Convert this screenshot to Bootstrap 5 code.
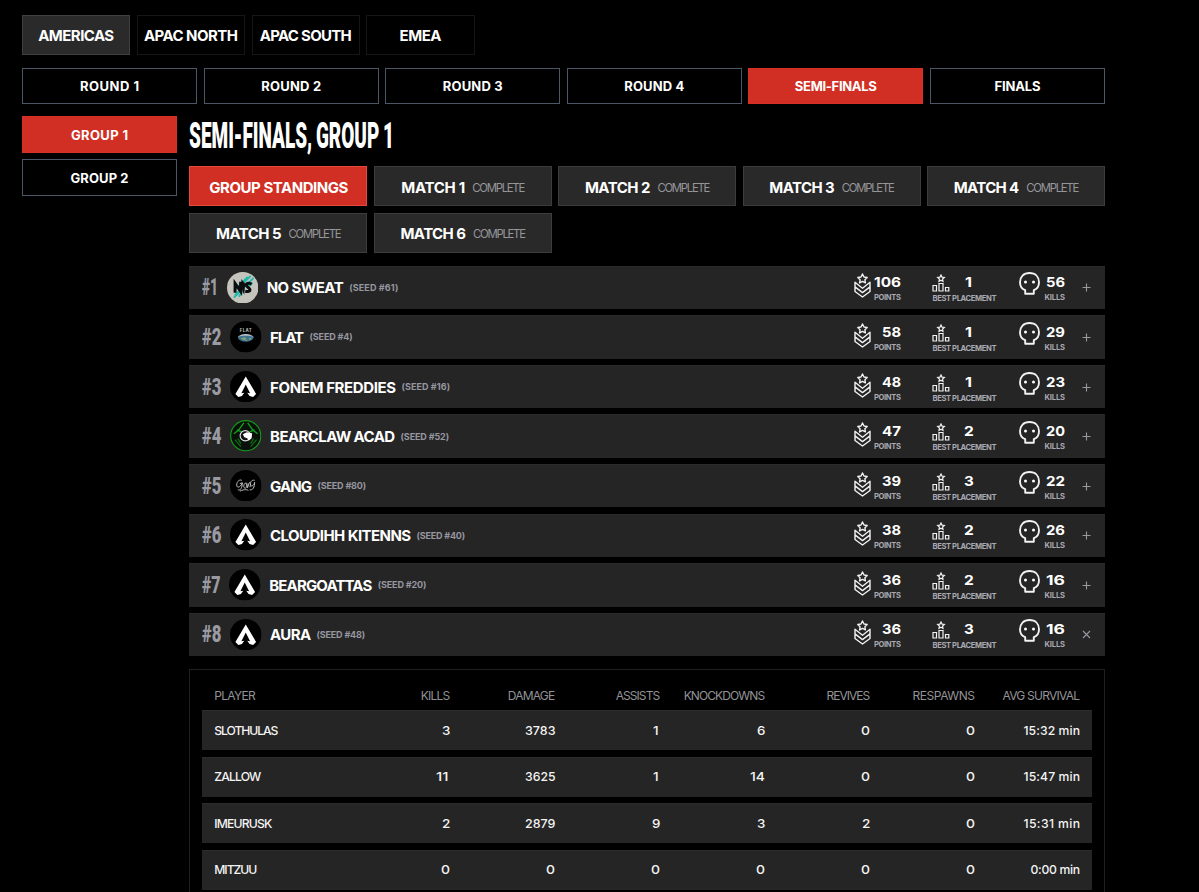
<!DOCTYPE html>
<html lang="en">
<head>
<meta charset="utf-8">
<title>Standings</title>
<link href="https://cdn.jsdelivr.net/npm/bootstrap@5.3.0/dist/css/bootstrap.min.css" rel="stylesheet">
<style>
body{background:#000;color:#fff;font-family:Inter,"Liberation Sans",sans-serif;overflow:hidden;height:892px}
.page-wrap{width:1083px;margin-left:22px;padding-top:15px}
.gap-s{gap:6.4px}
.rounds{margin-top:12.5px}
.layout{margin-top:12.3px;gap:12.3px}
.tile{display:flex;align-items:center;justify-content:center;border:1px solid;border-radius:0;padding:0;color:#fff;font-weight:700;line-height:1;white-space:nowrap}
.tile:hover{color:#fff}
.region{width:108.4px;height:40px;font-size:15px;border-color:#161616}
.region.on{background:#2a2a2a;border-color:#404040}
.stage{height:36.6px;font-size:13px;border:1.4px solid #4b5667;padding-top:1px}
.stage.on{background:#d12f24;border-color:#d93025}
.match{height:40.6px;font-size:15px;background:#292929;border-color:#3c3c3c;padding:2px 0 0 1px}
.match.on{background:#d12f24;border-color:#e3493e}
.match-grid{display:grid;grid-template-columns:repeat(5,1fr);gap:6.2px 6.4px}
.state{font-weight:400;font-size:11.3px;color:#97979a;margin-left:7px;position:relative;top:1px}
.side{width:155px}
.title{height:37px;margin-bottom:12.5px;line-height:39px;font-size:37px;font-family:Roboto,sans-serif;font-weight:900;word-spacing:-2px}
.sx{display:inline-block;white-space:nowrap;text-align:left}
.sx>span{display:inline-block;transform-origin:0 50%}
.teams{margin-top:12.4px;gap:6.2px}
.team{height:43.4px;background:#252525;padding-left:12.4px;border-top:1px solid #2b2b2b}
.rank{font-family:Roboto,sans-serif;font-weight:900;font-size:23px;line-height:24px;color:#9a9aa2;padding-top:1px}
.logo{width:31.5px;height:31.5px;margin:-1px 8.5px 0 9px;flex:none}
.tname{font-weight:700;font-size:15px;line-height:20px;white-space:nowrap;padding-top:1px}
.seed{font-weight:700;font-size:9px;line-height:20px;color:#9696a0;margin-left:5.5px;white-space:nowrap}
.stat{height:29px;line-height:1}
.st-points{width:47.5px;margin-right:31px}
.st-place{width:64.5px;margin-right:22.5px}
.st-kills{width:46px;margin-right:17px}
.num{font-weight:700;font-size:13.5px;line-height:13px;white-space:nowrap;margin-top:3px;height:13px}
.num .sx{vertical-align:top}
.lab{font-weight:700;font-size:7.6px;line-height:8px;color:#a9a9b3;white-space:nowrap;margin-top:5px}
.st-place .upper{height:22px}
.st-place .num{width:37px}
.st-place .lab{margin-top:0}
.st-place .ic{margin-top:1px}
.st-kills .ic{margin-top:-1px}
.toggle{margin-right:14px;stroke:#98989f;stroke-width:1.1}
.ic{fill:none;stroke:#f2f2f2;display:block;flex:none}
.panel{border:1px solid #202020;border-bottom:0;margin-top:12.6px;padding:13px 12px 0;height:260px}
.prow{display:grid;grid-template-columns:131px repeat(7,1fr);height:40.2px;margin-bottom:6.4px;background:#252525;border-top:1px solid #2c2c2c;padding:0 12px 0 12px;align-items:center;font-size:12.2px;line-height:18px;font-weight:500;color:#f4f4f4;white-space:nowrap}
.prow>*{text-align:right}.prow>:first-child{text-align:left}
.prow .sx{vertical-align:top}
.prow .one{margin-right:1.5px}
.prow.hd{height:27.4px;margin:0;background:none;border:0;font-size:12px;font-weight:400;color:#939396}
</style>
</head>
<body>
<svg class="d-none">
<symbol id="i-points" viewBox="0 0 17 25"><path d="M8.500 1l1.500 3 3.200.5-2.300 2.200.5 3.200-2.900-1.500-2.900 1.500.5-3.200L3.800 4.500 7 4zM1 9.300l7.500 6 7.500-6v9.200l-7.500 5.500L1 18.500zM1 13.900l7.500 5.700 7.500-5.700" stroke-width="1.400" stroke-linejoin="round"/></symbol>
<symbol id="i-place" viewBox="0 0 18 18"><path d="M9 1l1 2.100 2.300.3-1.700 1.600.4 2.300L9 6.200 7 7.300l.4-2.300-1.700-1.600L8 3.100zM1 11.500h3.500v5.500H1zM7 9.500h4v7.500H7zM13.500 13.500h3.300v3.500h-3.300z" stroke-width="1.200"/></symbol>
<symbol id="i-skull" viewBox="0 0 21 23"><path d="M6.200 21.700v-3.600C2.700 17 1 14.300 1 10.300 1 4.700 4.600 1 10.500 1S20 4.700 20 10.300c0 4-1.700 6.700-5.200 7.800v3.600z" stroke-width="1.900" stroke-linejoin="round"/><circle cx="6.500" cy="10" r="1.500" fill="#fff" stroke="none"/><circle cx="14.500" cy="10" r="1.500" fill="#fff" stroke="none"/></symbol>
<symbol id="l-apex" viewBox="0 0 32 32"><circle cx="16" cy="16" r="16" fill="#000"/><path d="M16 5.500L26.500 23.300l-3 3-3.600-.8-2.400-3.400 2.900.4L16 13.800l-4.400 8.700 2.900-.4-2.400 3.400-3.600.8-3-3z" fill="#fff"/></symbol>
<symbol id="l-ns" viewBox="0 0 32 32"><circle cx="16" cy="16" r="16" fill="#c6c5bd"/><path d="M24 4l-8 8M27 6L7 26M21 5L7 19M14 17l-6 7M26 11l-5 4M16 20l-4 5" stroke="#1fb9ad" stroke-width="1.900"/><path d="M8.200 21V11.500l5.600 8v-9.500M25 12.200c-5-2-7 .8-4 3s4 5.500-2.500 4.300" stroke="#0b0d0e" stroke-width="3" fill="none"/><path d="M14.500 7l4 5-1 11-2-4z" fill="#0b0d0e"/></symbol>
<symbol id="l-flat" viewBox="0 0 32 32"><circle cx="16" cy="16" r="16" fill="#000"/><text x="16" y="11" font-size="4.500" font-weight="700" text-anchor="middle" fill="#bbb" textLength="12">FLAT</text><path d="M8 17c1-5 15-5 16 0z" fill="#b3bdc0"/><path d="M8 16.500c4-2 12-2 16 0-1 6-15 6-16 0z" fill="#3b7293"/><path d="M11 17.500l4-1 2 2-3 1zM19 17l3 .5-2 2zM15 19.500h3l-1 1z" fill="#8aa468"/></symbol>
<symbol id="l-bear" viewBox="0 0 32 32"><circle cx="16" cy="16" r="15.300" fill="#0a110a" stroke="#149a1b" stroke-width="1.200"/><path d="M4 14l5-4 5-7M28 14l-5-4-5-7M7 10l5 2M25 10l-5 2" stroke="#13a01c" stroke-width="1.400" fill="none"/><path d="M5 20l6 7M27 20l-6 7M8 19l3 5M24 19l-3 5" stroke="#0d6d13" stroke-width="1.300" fill="none"/><circle cx="15.500" cy="16" r="5.200" fill="#111" stroke="#ddd" stroke-width="1.200"/><path d="M13 14.500l4-2 5.500 1-.5 5-3 2.500-1.500-2.500-3-1z" fill="#fff"/></symbol>
<symbol id="l-gang" viewBox="0 0 32 32"><circle cx="16" cy="16" r="16" fill="#000"/><path d="M12 10.500c-3-1.500-6 2.500-5 6 1.500 2.500 5-1 5.500-3.500l-2.500.8M12.500 13c0 5-2 8.500-4.500 7M14 16.500c0-4 3.200-4 3-.5s-3 3-3 .5M17 13l.8 5 1.700-5c1.500-1.500 1.500 2 .8 4.500M25 10.500c-3-1-5 2.500-4 5 1.500 2 3.800-1 4-3 0 5-2 8.500-5 7.500M10 21.500c5-2.500 9-1.500 8.500-.3" stroke="#bdbdbd" stroke-width="1" fill="none"/></symbol>
</svg>

<main class="page-wrap">
  <nav class="d-flex gap-s">
    <a class="btn tile region on"><span data-fit="76">AMERICAS</span></a>
    <a class="btn tile region"><span data-fit="94">APAC NORTH</span></a>
    <a class="btn tile region"><span data-fit="92">APAC SOUTH</span></a>
    <a class="btn tile region"><span data-fit="42">EMEA</span></a>
  </nav>
  <nav class="rounds d-flex gap-s">
    <a class="btn tile stage flex-fill w-100"><span data-fit="59">ROUND 1</span></a>
    <a class="btn tile stage flex-fill w-100"><span data-fit="60">ROUND 2</span></a>
    <a class="btn tile stage flex-fill w-100"><span data-fit="60">ROUND 3</span></a>
    <a class="btn tile stage flex-fill w-100"><span data-fit="60">ROUND 4</span></a>
    <a class="btn tile stage on flex-fill w-100"><span data-fit="82">SEMI-FINALS</span></a>
    <a class="btn tile stage flex-fill w-100"><span data-fit="46">FINALS</span></a>
  </nav>
  <div class="layout d-flex">
    <aside class="side d-flex flex-column flex-shrink-0 gap-s">
      <a class="btn tile stage on"><span data-fit="57">GROUP 1</span></a>
      <a class="btn tile stage"><span data-fit="58">GROUP 2</span></a>
    </aside>
    <section class="flex-grow-1">
      <h1 class="title"><span class="sx" data-w="205"><span>SEMI-FINALS, GROUP 1</span></span></h1>
      <div class="match-grid" id="matches"></div>
      <div class="teams d-flex flex-column" id="teams"></div>
      <div class="panel" id="players"></div>
    </section>
  </div>
</main>
<script src="https://cdn.jsdelivr.net/npm/bootstrap@5.3.0/dist/js/bootstrap.bundle.min.js"></script>
<script>
document.getElementById('matches').innerHTML =
  '<a class="btn tile match on"><span data-fit="139">GROUP STANDINGS</span></a>' +
  [1,2,3,4,5,6].map(n => `<a class="btn tile match"><span data-fit="${n==1?64:65.5}">MATCH ${n}</span><span class="state" data-fit="53">COMPLETE</span></a>`).join('');

const figure = (v, w, cls = '') => `<span class="sx ${cls}" data-w="${w}"><span>${v}</span></span>`;

// name, name width, seed, seed width, rank width, logo, points, placement, kills
const teams = [
  ['NO SWEAT',77,61,49,16,'ns',106,1,56],
  ['FLAT',34,4,43,19.4,'flat',58,1,29],
  ['FONEM FREDDIES',126,16,48.5,19.4,'apex',48,1,23],
  ['BEARCLAW ACAD',125,52,48.5,19.4,'bear',47,2,20],
  ['GANG',42,80,48.5,19.4,'gang',39,3,22],
  ['CLOUDIHH KITENNS',141,40,48.5,19.4,'apex',38,2,26],
  ['BEARGOATTAS',103,20,48.5,18.6,'apex',36,2,16],
  ['AURA',41,48,48.5,19.4,'apex',36,3,16]];
document.getElementById('teams').innerHTML = teams.map((t,i) => `
<div class="team d-flex align-items-center">
  <span class="rank sx" data-w="${t[4]}"><span>#${i+1}</span></span>
  <svg class="logo"><use href="#l-${t[5]}"/></svg>
  <span class="tname" data-fit="${t[1]}">${t[0]}</span>
  <span class="seed" data-fit="${t[3]}">(SEED #${t[2]})</span>
  <div class="d-flex ms-auto">
    <div class="stat st-points d-flex justify-content-between">
      <svg class="ic" width="17" height="25"><use href="#i-points"/></svg>
      <div class="text-end"><div class="num">${figure(t[6], t[6]>99?27:19)}</div><div class="lab" data-fit="27">POINTS</div></div>
    </div>
    <div class="stat st-place">
      <div class="upper d-flex"><svg class="ic" width="18" height="18"><use href="#i-place"/></svg><div class="num text-center">${figure(t[7], t[7]==1?7:9.8)}</div></div>
      <div class="lab" data-fit="64">BEST PLACEMENT</div>
    </div>
    <div class="stat st-kills d-flex justify-content-between">
      <svg class="ic" width="21" height="23"><use href="#i-skull"/></svg>
      <div class="text-end"><div class="num">${figure(t[8], 19)}</div><div class="lab" data-fit="20.5">KILLS</div></div>
    </div>
    <svg class="toggle align-self-center" width="9" height="9"><path d="${i==7?'M1 1l7 7M8 1l-7 7':'M.5 4.500h8M4.500.5v8'}"/></svg>
  </div>
</div>`).join('');

const head = [['PLAYER',41.5],['KILLS',29.5],['DAMAGE',47.5],['ASSISTS',44.5],['KNOCKDOWNS',81.5],['REVIVES',43.5],['RESPAWNS',62.5],['AVG SURVIVAL',77.5]];
const rows = [
  [['SLOTHULAS',64],3,3783,1,6,0,0,'15:32 min'],
  [['ZALLOW',47],11,3625,1,14,0,0,'15:47 min'],
  [['IMEURUSK',58],2,2879,9,3,2,0,'15:31 min'],
  [['MITZUU',43],0,0,0,0,0,0,'0:00 min']];
const widths = {'0':9, '1':5.6, '11':12.5, '14':15};
const cell = (c,i) => {
  if (!i) return `<div><span data-fit="${c[1]}">${c[0]}</span></div>`;
  if (i == 7) return `<div><span data-fit="${c.length > 8 ? 56.5 : 49.5}">${c}</span></div>`;
  const s = String(c);
  return `<div>${figure(s, widths[s] || (s.length === 4 ? 30.5 : 8.4), /^1+$/.test(s) ? 'one' : '')}</div>`;
};
document.getElementById('players').innerHTML =
  '<div class="prow hd">' + head.map(h => `<div><span data-fit="${h[1]}">${h[0]}</span></div>`).join('') + '</div>' +
  rows.map(r => '<div class="prow">' + r.map(cell).join('') + '</div>').join('');

// Track each label to its set measure; display text and figures are scaled instead.
function textWidth(el){const r=document.createRange();r.selectNodeContents(el);return r.getBoundingClientRect().width}
document.querySelectorAll('[data-fit]').forEach(el => {
  if (el.classList.contains('lab')) el.style.width = el.dataset.fit + 'px', el.style.marginLeft = 'auto', el.style.textAlign = 'left';
  const n = el.textContent.length, ls = (el.dataset.fit - textWidth(el)) / (n - 1);
  el.style.letterSpacing = ls + 'px';
  if (!el.classList.contains('lab')) el.style.marginRight = -ls + 'px';
});
document.querySelectorAll('.sx').forEach(el => {
  const s = el.firstElementChild, w = s.getBoundingClientRect().width;
  el.style.width = el.dataset.w + 'px';
  s.style.transform = 'scaleX(' + el.dataset.w / w + ')';
});
</script>
</body>
</html>
